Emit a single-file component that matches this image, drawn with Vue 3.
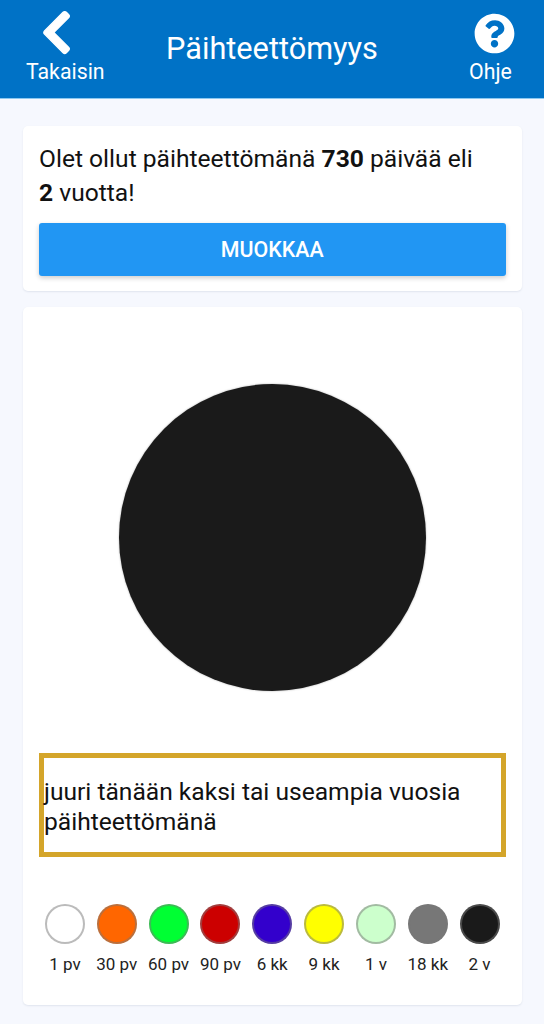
<script setup>
const legend = [
  { label: '1 pv', color: '#ffffff' },
  { label: '30 pv', color: '#ff6600' },
  { label: '60 pv', color: '#00ff33' },
  { label: '90 pv', color: '#cc0000' },
  { label: '6 kk', color: '#3300cc' },
  { label: '9 kk', color: '#ffff00' },
  { label: '1 v', color: '#ccffcc' },
  { label: '18 kk', color: '#777777' },
  { label: '2 v', color: '#1a1a1a' }
]
</script>

<template>
  <div class="page">
    <header class="bar">
      <div class="nav nav-left">
        <svg class="back" viewBox="0 0 320 512" aria-hidden="true">
          <path fill="#fff" stroke="#fff" stroke-width="14" stroke-linejoin="round" d="M34.52 239.03L228.87 44.69c9.37-9.37 24.57-9.37 33.94 0l22.67 22.67c9.36 9.36 9.38 24.53.04 33.9L131.49 256l154.02 154.75c9.34 9.38 9.32 24.55-.04 33.9l-22.67 22.67c-9.37 9.37-24.57 9.37-33.94 0L34.52 272.97c-9.37-9.37-9.37-24.57 0-33.94z" />
        </svg>
        <span>Takaisin</span>
      </div>
      <h1 class="title">Päihteettömyys</h1>
      <div class="nav nav-right">
        <svg class="help" viewBox="0 0 512 512" aria-hidden="true">
          <path fill="#fff" d="M504 256c0 136.997-111.043 248-248 248S8 392.997 8 256C8 119.083 119.043 8 256 8s248 111.083 248 248zM262.655 90c-54.497 0-89.255 22.957-116.549 63.758-3.536 5.286-2.353 12.415 2.715 16.258l34.699 26.31c5.205 3.947 12.621 3.008 16.665-2.122 17.864-22.658 30.113-35.797 57.303-35.797 20.429 0 45.698 13.148 45.698 32.958 0 14.976-12.363 22.667-32.534 33.976C247.128 238.528 216 254.941 216 296v4c0 6.627 5.373 12 12 12h56c6.627 0 12-5.373 12-12v-1.333c0-28.462 83.186-29.647 83.186-106.667 0-58.002-60.165-102-116.531-102zM256 338c-25.365 0-46 20.635-46 46 0 25.364 20.635 46 46 46s46-20.636 46-46c0-25.365-20.635-46-46-46z" />
        </svg>
        <span>Ohje</span>
      </div>
    </header>

    <main class="content">
      <section class="card summary">
        <p class="summary-text">Olet ollut päihteettömänä <b>730</b> päivää eli <b>2</b>&nbsp;vuotta!</p>
        <button class="edit" type="button">MUOKKAA</button>
      </section>

      <section class="card badge-card">
        <div class="disc-wrap">
          <div class="disc"></div>
        </div>
        <div class="message">juuri tänään kaksi tai useampia vuosia päihteettömänä</div>
        <ul class="legend">
          <li v-for="item in legend" :key="item.label" class="legend-item">
            <span class="dot" :style="{ backgroundColor: item.color }"></span>
            <span class="legend-label">{{ item.label }}</span>
          </li>
        </ul>
      </section>
    </main>
  </div>
</template>

<style scoped>
.page {
  width: 544px;
  height: 1024px;
  overflow: hidden;
  background: #f6f8fe;
  font-family: Roboto, "Liberation Sans", sans-serif;
  color: #111;
}
.bar {
  box-sizing: border-box;
  height: 99px;
  background: #0072c6;
  border-bottom: 1px solid #8cc8f0;
  display: grid;
  grid-template-columns: 1fr auto 1fr;
  align-items: start;
  color: #fff;
}
.nav {
  display: flex;
  flex-direction: column;
  align-items: center;
  font-size: 21.3px;
  line-height: 24px;
}
.nav-left {
  justify-self: start;
  margin-left: 26px;
  padding-top: 8px;
}
.nav-right {
  justify-self: end;
  margin-right: 29px;
  padding-top: 13px;
}
.back {
  width: 31px;
  height: 49px;
  display: block;
  margin-right: 18px;
  margin-bottom: 3px;
}
.help {
  width: 41px;
  height: 41px;
  display: block;
  margin-left: 8px;
  margin-bottom: 6px;
}
.title {
  margin: 30px 0 0;
  font-size: 30.7px;
  line-height: 38px;
  font-weight: 400;
  color: #fff;
}
.content {
  padding: 27px 22.5px 0 23px;
  display: flex;
  flex-direction: column;
  gap: 16px;
}
.card {
  background: #fff;
  border-radius: 5px;
  box-shadow: 0 1px 2px rgba(40, 60, 100, 0.1);
  box-sizing: border-box;
}
.summary {
  height: 165px;
  padding: 16px 16px 0;
}
.summary-text {
  margin: 0;
  font-size: 24.6px;
  line-height: 34px;
  color: #111;
}
.summary-text b {
  font-weight: 700;
}
.edit {
  display: block;
  width: 100%;
  height: 53px;
  margin-top: 13px;
  border: 0;
  border-radius: 3px;
  background: #2196f3;
  color: #fff;
  font-family: inherit;
  font-size: 21.4px;
  font-weight: 500;
  box-shadow: 0 2px 5px rgba(0, 0, 0, 0.2);
}
.badge-card {
  height: 698px;
  padding: 0 16px;
}
.disc-wrap {
  display: flex;
  justify-content: center;
  padding-top: 77px;
}
.disc {
  width: 307px;
  height: 307px;
  border-radius: 50%;
  background: #1a1a1a;
  box-shadow: 0 0 2px rgba(0, 0, 0, 0.35);
}
.message {
  box-sizing: border-box;
  height: 104px;
  margin-top: 62px;
  padding-top: 3px;
  border: 5px solid #d4a52a;
  display: flex;
  align-items: center;
  font-size: 24.6px;
  line-height: 30px;
  color: #111;
}
.legend {
  list-style: none;
  margin: 47px 0 0;
  padding: 0;
  display: grid;
  grid-template-columns: repeat(9, 1fr);
}
.legend-item {
  display: flex;
  flex-direction: column;
  align-items: center;
  gap: 10px;
}
.dot {
  box-sizing: border-box;
  width: 40px;
  height: 40px;
  border-radius: 50%;
  border: 2px solid rgba(120, 120, 120, 0.5);
}
.legend-label {
  font-size: 17px;
  line-height: 20px;
  color: #222;
  white-space: nowrap;
}
</style>
